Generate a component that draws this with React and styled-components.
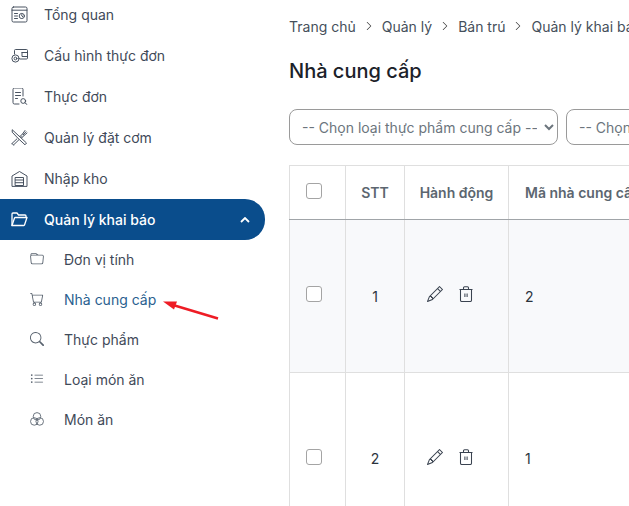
import React from 'react';
import styled, { createGlobalStyle } from 'styled-components';
import { BsChevronRight, BsFolder, BsCart, BsSearch, BsListUl, BsPencil } from 'react-icons/bs';

const GlobalStyle = createGlobalStyle`
  html, body {
    margin: 0;
    padding: 0;
    background: #fff;
  }
  body {
    font-family: Inter, "Noto Sans", sans-serif;
    font-size: 14px;
    color: #3f4a59;
  }
`;

const Page = styled.div`
  position: relative;
  display: flex;
  width: 629px;
  height: 506px;
  overflow: hidden;
  background: #fff;
`;

const Sidebar = styled.nav`
  flex: none;
  width: 265px;
  margin-top: -6px;
`;

const MenuItem = styled.div`
  display: flex;
  align-items: center;
  height: 41px;
  padding: 0 15px 0 11px;
  gap: 16px;
  color: ${(p) => (p.$active ? '#fff' : '#3f4a59')};
  background: ${(p) => (p.$active ? '#0a4d8c' : 'transparent')};
  border-radius: ${(p) => (p.$active ? '0 20px 20px 0' : '0')};
  font-weight: ${(p) => (p.$active ? 500 : 400)};
`;

const MenuIcon = styled.svg`
  flex: none;
  width: 17px;
  height: 17px;
  fill: none;
  stroke: currentColor;
  stroke-width: ${(p) => (p.$bold ? 1.3 : 0.95)};
  stroke-linecap: round;
  stroke-linejoin: round;
`;

const MenuLabel = styled.span`
  flex: 1;
`;

const Chevron = styled.svg`
  flex: none;
  width: 10px;
  height: 6px;
  fill: none;
  stroke: #fff;
  stroke-width: 1.8;
`;

const SubList = styled.div`
  margin-top: -1px;
`;

const SubItem = styled.div`
  display: flex;
  align-items: center;
  height: 40px;
  padding-left: 30px;
  gap: 20px;
  color: ${(p) => (p.$current ? '#2a5f8f' : '#3f4a59')};

  svg {
    flex: none;
    width: 14px;
    height: 14px;
    color: #59636f;
  }
`;

const Main = styled.main`
  flex: 1;
  min-width: 0;
  padding-left: 24px;
`;

const Notice = styled.div`
  height: 2px;
  overflow: hidden;
  padding-left: 120px;
  color: #ee3030;
  white-space: nowrap;
  line-height: 2px;
  transform: translateY(-5px);
`;

const Breadcrumb = styled.div`
  display: flex;
  align-items: center;
  gap: 8px;
  height: 18px;
  margin-top: 15px;
  color: #454f5b;
  white-space: nowrap;

  svg {
    width: 10px;
    height: 10px;
    flex: none;
    color: #333;
  }
`;

const Title = styled.h1`
  margin: 21px 0 0;
  font-size: 20px;
  line-height: 30px;
  font-weight: 500;
  color: #1b2129;
  white-space: nowrap;
`;

const Filters = styled.div`
  display: flex;
  gap: 8px;
  margin-top: 23px;
`;

const Select = styled.select`
  flex: none;
  width: 269px;
  height: 36px;
  padding: 0 4px 0 8px;
  border: 1px solid #9a9a9a;
  border-radius: 8px;
  background: #fff;
  color: #6c757d;
  font-family: inherit;
  font-size: 14px;
`;

const Table = styled.table`
  margin-top: 20px;
  border-collapse: collapse;
  table-layout: fixed;
  width: 500px;
`;

const Th = styled.th`
  box-sizing: border-box;
  width: ${(p) => p.$w}px;
  height: 54px;
  padding: 0;
  border: 1px solid #dfdfdf;
  border-bottom: 1px solid #a0a4a8;
  color: #5c6670;
  font-weight: 600;
  font-size: 14px;
  text-align: ${(p) => (p.$left ? 'left' : 'center')};
  padding-left: ${(p) => (p.$left ? 16 : 0)}px;
  white-space: nowrap;
  overflow: hidden;
`;

const Row = styled.tr`
  height: ${(p) => p.$h}px;
  background: ${(p) => (p.$shaded ? '#f8f9fb' : '#fff')};
`;

const Td = styled.td`
  padding: 0;
  border: 1px solid #dfdfdf;
  color: #2b333d;
  text-align: ${(p) => (p.$left ? 'left' : 'center')};
  padding-left: ${(p) => (p.$left ? 16 : 0)}px;
`;

const Check = styled.input.attrs({ type: 'checkbox' })`
  appearance: none;
  display: block;
  width: 16px;
  height: 16px;
  margin: 0 0 4px 16px;
  background: #fff;
  border: 1px solid #a4a4a4;
  border-radius: 3px;
`;

const Actions = styled.div`
  display: flex;
  align-items: center;
  gap: 16px;
  padding-left: 22px;
  margin-bottom: 4px;
  color: #3a4350;

  svg {
    flex: none;
    width: 16px;
    height: 16px;
  }
`;

const TrashSvg = styled.svg`
  && {
    width: 14px;
  }
  fill: none;
  stroke: currentColor;
  stroke-width: 1.05;
  stroke-linejoin: round;
`;

const Arrow = styled.svg`
  position: absolute;
  left: 155px;
  top: 292px;
  width: 70px;
  height: 34px;
`;

function TrashIcon() {
  return (
    <TrashSvg viewBox="0 0 14 16">
      <path d="M.5 3.500h13M1.500 3.500v10.800a1.200 1.200 0 0 0 1.200 1.200h8.600a1.200 1.200 0 0 0 1.200-1.200V3.500" />
      <path d="M4.500 3.500V1.800a1 1 0 0 1 1-1h3a1 1 0 0 1 1 1v1.700" />
      <path d="M5.900 7.500v3.500M8.100 7.500v3.500" />
    </TrashSvg>
  );
}

function BlendIcon() {
  return (
    <svg viewBox="0 0 16 16" fill="none" stroke="currentColor" strokeWidth="1">
      <circle cx="8" cy="5" r="4.300" />
      <circle cx="4.900" cy="10.800" r="4.300" />
      <circle cx="11.100" cy="10.800" r="4.300" />
    </svg>
  );
}

const menu = [
  {
    label: 'Tổng quan',
    icon: (
      <>
        <rect x="1" y="1" width="15" height="15" rx="1.500" />
        <path d="M1 4.200h15M3.500 7.500h3M3.500 10h3M3.500 12.500h3" />
        <circle cx="10.800" cy="10" r="2.600" />
        <path d="M10.800 8.600V10l1 .8" />
      </>
    ),
  },
  {
    label: 'Cấu hình thực đơn',
    icon: (
      <>
        <path d="M3.500 7V3.500a1 1 0 0 1 1-1h11a1 1 0 0 1 1 1v7.500a1 1 0 0 1-1 1H9" />
        <path d="M11 5.500h5.500M11 5.500v4h5.500" />
        <circle cx="4.500" cy="11.500" r="3.600" />
        <circle cx="4.500" cy="11.500" r="1.400" />
      </>
    ),
  },
  {
    label: 'Thực đơn',
    icon: (
      <>
        <path d="M8 16H3.500A1.500 1.500 0 0 1 2 14.500v-13A1.500 1.500 0 0 1 3.500 0h7A1.500 1.500 0 0 1 12 1.500V8" />
        <path d="M4.500 4.500h5M4.500 7.500h5M4.500 10.500h2" />
        <circle cx="12.200" cy="13" r="2.400" />
        <path d="M14 14.800l2 1.700" />
      </>
    ),
  },
  {
    label: 'Quản lý đặt cơm',
    icon: (
      <>
        <path d="M1.500 1L15.500 14 14 15.800 7 9.300 1.500 3.500z" />
        <path d="M1 14.500L6 9.800M2.500 16l5.200-5" />
        <path d="M1 14.500l1.500 1.500M9.500 7l2-2 M11 8.500l1.800-1.800M9.500 7L11 8.500" />
        <path d="M11.500 5l2.500-3.500M12.800 6.700L16 4M12.200 5.800l2.800-3" />
      </>
    ),
  },
  {
    label: 'Nhập kho',
    icon: (
      <>
        <path d="M1 16V6L8.500 1.500 16 6V16z" />
        <rect x="4.500" y="7.500" width="8" height="8" />
        <path d="M4.500 10h8M4.500 12.700h8" />
      </>
    ),
  },
];

const subMenu = [
  { label: 'Đơn vị tính', icon: <BsFolder /> },
  { label: 'Nhà cung cấp', icon: <BsCart />, current: true },
  { label: 'Thực phẩm', icon: <BsSearch /> },
  { label: 'Loại món ăn', icon: <BsListUl /> },
  { label: 'Món ăn', icon: <BlendIcon /> },
];

const rows = [
  { stt: 1, code: 2, h: 153, shaded: true },
  { stt: 2, code: 1, h: 172 },
];

export default function App() {
  return (
    <Page>
      <GlobalStyle />
      <Sidebar>
        {menu.map((item) => (
          <MenuItem key={item.label}>
            <MenuIcon viewBox="0 0 17 17">{item.icon}</MenuIcon>
            <MenuLabel>{item.label}</MenuLabel>
          </MenuItem>
        ))}
        <MenuItem $active>
          <MenuIcon viewBox="0 0 17 17" $bold>
            <path d="M1 14.500V3a1 1 0 0 1 1-1h4l1.500 2H14a1 1 0 0 1 1 1v1.500" />
            <path d="M1 14.500L3.500 7a1 1 0 0 1 1-.5H16L13.500 14a1 1 0 0 1-1 .5z" />
          </MenuIcon>
          <MenuLabel>Quản lý khai báo</MenuLabel>
          <Chevron viewBox="0 0 10 6">
            <path d="M1 5l4-4 4 4" />
          </Chevron>
        </MenuItem>
        <SubList>
          {subMenu.map((item) => (
            <SubItem key={item.label} $current={item.current}>
              {item.icon}
              <span>{item.label}</span>
            </SubItem>
          ))}
        </SubList>
      </Sidebar>
      <Main>
        <Notice>Vui lòng nhập đầy đủ thông tin quy định</Notice>
        <Breadcrumb>
          <span>Trang chủ</span>
          <BsChevronRight />
          <span>Quản lý</span>
          <BsChevronRight />
          <span>Bán trú</span>
          <BsChevronRight />
          <span>Quản lý khai báo</span>
        </Breadcrumb>
        <Title>Nhà cung cấp</Title>
        <Filters>
          <Select defaultValue="">
            <option value="">-- Chọn loại thực phẩm cung cấp --</option>
          </Select>
          <Select defaultValue="">
            <option value="">-- Chọn nhà cung cấp --</option>
          </Select>
        </Filters>
        <Table>
          <thead>
            <tr>
              <Th $w={56}><Check /></Th>
              <Th $w={59}>STT</Th>
              <Th $w={104}>Hành động</Th>
              <Th $w={281} $left>Mã nhà cung cấp</Th>
            </tr>
          </thead>
          <tbody>
            {rows.map((row) => (
              <Row key={row.stt} $h={row.h} $shaded={row.shaded}>
                <Td><Check /></Td>
                <Td>{row.stt}</Td>
                <Td>
                  <Actions>
                    <BsPencil />
                    <TrashIcon />
                  </Actions>
                </Td>
                <Td $left>{row.code}</Td>
              </Row>
            ))}
          </tbody>
        </Table>
      </Main>
      <Arrow viewBox="0 0 70 34">
        <path d="M63 26.500L18 13" stroke="#ee1c25" strokeWidth="2.500" />
        <path d="M8 9.500L22 9.500L19 17.500z" fill="#ee1c25" />
      </Arrow>
    </Page>
  );
}
